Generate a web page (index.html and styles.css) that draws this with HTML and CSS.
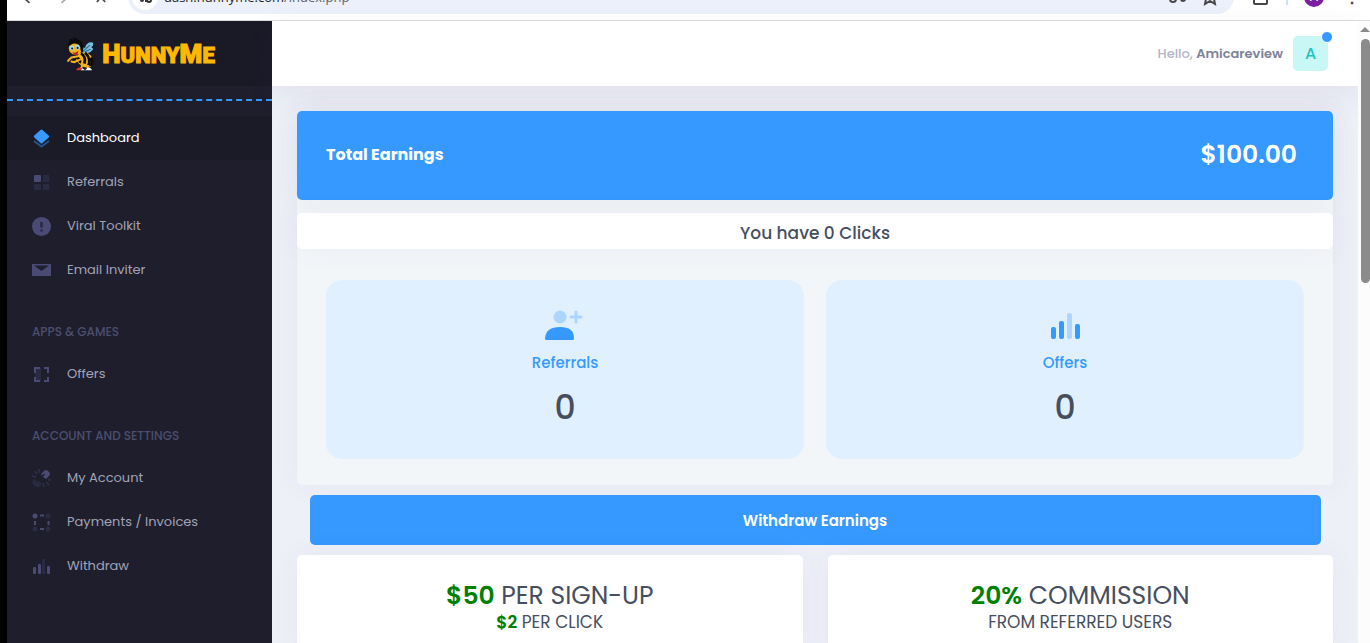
FILE: index.html
```html
<!DOCTYPE html>
<html lang="en">

<head>
    <meta charset="UTF-8">
    <meta name="viewport" content="width=device-width, initial-scale=1.0">
    <title>HunnyMe - Dashboard</title>
    <link rel="stylesheet" href="styles.css">
</head>

<body>
    <!-- Browser toolbar -->
    <div class="toolbar">
        <svg class="nav-icon" viewBox="0 0 24 24"><path d="M15 5L7 12l8 7"/></svg>
        <svg class="nav-icon muted" viewBox="0 0 24 24"><path d="M9 5l8 7-8 7"/></svg>
        <svg class="nav-icon" viewBox="0 0 24 24"><path d="M7 18l10-11M7 7l10 11"/></svg>
        <div class="address">
            <span class="site-info">
                <svg viewBox="0 0 16 16"><path d="M1 6h6M8 12h2"/><circle cx="5" cy="11" r="1"/><circle cx="12" cy="11" r="2"/></svg>
            </span>
            <span class="url">dash.hunnyme.com<span>/index.php</span></span>
            <svg class="tool-icon" viewBox="0 0 20 20"><circle cx="5" cy="12" r="3"/><circle cx="15" cy="12" r="2"/></svg>
            <svg class="tool-icon" viewBox="0 0 20 20"><path d="M10 2l2 5 6 1-4 4 1 5-5-3-5 3 1-5-4-4 6-1z"/></svg>
        </div>
        <svg class="tool-icon extension" viewBox="0 0 20 20"><path d="M4 4h13v12a1 1 0 0 1-1 1H5a1 1 0 0 1-1-1z"/></svg>
        <span class="divider"></span>
        <span class="profile">A</span>
        <span class="dots">&#8942;</span>
    </div>

    <div class="app">
        <!-- Sidebar -->
        <aside class="sidebar">
            <a href="#" class="brand">
                <svg class="bee" viewBox="0 0 50 50">
                    <path d="M17 9Q12 3 8 4M22 8Q18 1 13 1" fill="none" stroke="#08080c" stroke-width="1.5"/>
                    <path d="M27 21Q26 14 31 16Q33 7 42 8Q45 11 40 15Q45 17 41 20Q38 25 27 24z" fill="#79bfe0"/>
                    <path d="M28 21l10-9M30 22l9-4" stroke="#2d6f95" stroke-width="1.5"/>
                    <path d="M22 24Q36 20 41 30Q44 39 38 45Q24 46 18 33z" fill="#f4b21b"/>
                    <path d="M25 24Q33 29 30 39M31 23Q41 32 35 44M19 30Q25 34 23 38M40 30Q43 38 39 43" fill="none" stroke="#0b0a0a" stroke-width="4"/>
                    <circle cx="17" cy="16" r="10" fill="#f4b21b"/>
                    <path d="M6 14Q5 3 18 3Q31 6 28 22Q24 24 24 15Q19 8 13 10z" fill="#0b0a0a"/>
                    <ellipse cx="12" cy="16" rx="3" ry="4" fill="#9edbf2"/>
                    <ellipse cx="20" cy="15" rx="3" ry="4" fill="#9edbf2"/>
                    <circle cx="12" cy="17" r="1.5" fill="#123"/>
                    <circle cx="20" cy="16" r="1.5" fill="#123"/>
                    <path d="M12 22Q18 25 21 20Q21 27 16 27z" fill="#b92718"/>
                    <path d="M23 28l-12 2-5 5M24 33l-9 4-4-1" fill="none" stroke="#f4b21b" stroke-width="3" stroke-linecap="round"/>
                    <path d="M28 40l-3 6M35 41v5" stroke="#f4b21b" stroke-width="3"/>
                    <path d="M18 49q1-5 7-4l2 4z" fill="#d73532"/>
                    <path d="M25 49l2-3 4 3zM31 49l4-4q5 0 6 4z" fill="#fff"/>
                </svg>
                <span class="brand-name"><b>H</b>UNNY<b>M</b>E</span>
            </a>

            <nav class="menu">
                <a href="#" class="active">
                    <svg viewBox="0 0 24 24">
                        <path d="M5 15l7.500 5.500L20 15" fill="none" stroke="currentColor" stroke-width="2" opacity=".45"/>
                        <path d="M11.500 4q1-1 2 0l6.200 5.500q1 1 0 2L13.500 17q-1 1-2 0l-6.200-5.500q-1-1 0-2z"/>
                    </svg>
                    Dashboard
                </a>
                <a href="#">
                    <svg viewBox="0 0 24 24">
                        <rect x="5" y="5" width="7" height="7" rx="1"/>
                        <path class="dim" d="M14 5h6v7h-6zM5 14h7v6H5zM14 14h6v6h-6z"/>
                    </svg>
                    Referrals
                </a>
                <a href="#">
                    <svg viewBox="0 0 24 24">
                        <circle cx="12.500" cy="12.500" r="9.500"/>
                        <path d="M12.500 8v5.500M12.500 15.500v2" stroke="#2a2a40" stroke-width="2.500"/>
                    </svg>
                    Viral Toolkit
                </a>
                <a href="#">
                    <svg viewBox="0 0 24 24">
                        <path d="M3 6h19v12H3z"/>
                        <path d="M5 7.500h15L12.500 13z" fill="#1e1e2d"/>
                    </svg>
                    Email Inviter
                </a>

                <h4>Apps &amp; Games</h4>
                <a href="#">
                    <svg viewBox="0 0 24 24">
                        <path class="dim" d="M6 6h6v13H6z"/>
                        <path d="M11 6H6v5M6 15v4h5M15 6h4v5M19 15v4h-4" fill="none" stroke="currentColor" stroke-width="2"/>
                    </svg>
                    Offers
                </a>

                <h4>Account and Settings</h4>
                <a href="#">
                    <svg viewBox="0 0 24 24">
                        <path d="M12 8l3-3q2-2 4 0l1 1q2 2 0 4l-3 3-3-2 2-3-2 0-1 2z"/>
                        <path class="dim" d="M5 13l3 3 2-1 3 3-3 3q-2 1-4-1l-2-2q-2-2 1-5z"/>
                        <path d="M10 3v4M6 5l2 3M3 10l4 1M14 17l1 4M17 16l3 3M19 14h3" fill="none" stroke="#30304a" stroke-width="1.500"/>
                    </svg>
                    My Account
                </a>
                <a href="#">
                    <svg viewBox="0 0 24 24">
                        <circle cx="6" cy="6" r="2.500"/>
                        <path d="M11 5.500h4M11 19h4M6 11v4M19.500 11v4" stroke="currentColor" stroke-width="2"/>
                        <g class="dim"><circle cx="19" cy="6" r="2.500"/><circle cx="6" cy="19" r="2.500"/><circle cx="19" cy="19" r="2.500"/></g>
                    </svg>
                    Payments / Invoices
                </a>
                <a href="#">
                    <svg viewBox="0 0 24 24">
                        <rect x="4" y="13" width="3" height="7" rx="1"/>
                        <rect x="9" y="10" width="3" height="10" rx="1"/>
                        <rect class="dim" x="13" y="5" width="3" height="15" rx="1"/>
                        <rect x="18" y="12" width="3" height="8" rx="1"/>
                    </svg>
                    Withdraw
                </a>
            </nav>
        </aside>

        <!-- Page -->
        <div class="page">
            <header class="topbar">
                <span class="hello">Hello, <b>Amicareview</b></span>
                <a href="#" class="avatar">A</a>
            </header>

            <main class="content">
                <section class="summary">
                    <div class="earnings">
                        <h3>Total Earnings</h3>
                        <span class="amount">$100.00</span>
                    </div>
                    <div class="clicks">You have 0 Clicks</div>
                    <div class="tiles">
                        <div class="tile">
                            <svg viewBox="0 0 40 36">
                                <g class="light">
                                    <circle cx="15" cy="9" r="6.500"/>
                                    <path d="M31 4v10M26 9h10" fill="none" stroke="#acd6ff" stroke-width="3" stroke-linecap="round"/>
                                </g>
                                <path d="M0 30Q1 19 15 19T29 30q0 2-1 2H1q-1 0-1-2z"/>
                            </svg>
                            <a href="#">Referrals</a>
                            <span class="count">0</span>
                        </div>
                        <div class="tile">
                            <svg viewBox="0 0 40 36">
                                <rect x="6" y="19" width="5" height="12" rx="2"/>
                                <rect x="14" y="13" width="5" height="18" rx="2"/>
                                <rect class="light" x="22" y="5" width="5" height="26" rx="2"/>
                                <rect x="30" y="16" width="5" height="15" rx="2"/>
                            </svg>
                            <a href="#">Offers</a>
                            <span class="count">0</span>
                        </div>
                    </div>
                </section>

                <button type="button" class="withdraw">Withdraw Earnings</button>

                <section class="rates">
                    <div class="rate">
                        <h2><b>$50</b> PER SIGN-UP</h2>
                        <p><b>$2</b> PER CLICK</p>
                    </div>
                    <div class="rate">
                        <h2><b>20%</b> COMMISSION</h2>
                        <p>FROM REFERRED USERS</p>
                    </div>
                </section>
            </main>
        </div>

        <div class="scrollbar">
            <span class="arrow"></span>
            <span class="thumb"></span>
        </div>
    </div>
</body>

</html>
```
FILE: styles.css
```css
* {
    box-sizing: border-box;
}

body {
    display: flex;
    flex-direction: column;
    height: 100vh;
    margin: 0;
    padding-left: 7px;
    overflow: hidden;
    background-color: #000;
    color: #464e5f;
    font-family: Poppins, Inter, sans-serif;
    font-size: 13px;
}

a {
    text-decoration: none;
}

h2,
h3,
h4,
p {
    margin: 0;
}

/* Browser toolbar, scrolled partly off the top edge */
.toolbar {
    display: flex;
    flex: none;
    align-items: center;
    height: 41px;
    margin-top: -20px;
    padding: 0 10px 6px;
    background-color: #fff;
    border-bottom: 1px solid #dadce0;
}

.nav-icon {
    width: 20px;
    margin-right: 17px;
    fill: none;
    stroke: #474747;
    stroke-width: 2;
}

.nav-icon.muted {
    stroke: #aaa;
}

.address {
    display: flex;
    flex: 1;
    align-items: center;
    height: 34px;
    padding: 0 14px 0 4px;
    background-color: #ebf0fa;
    border-radius: 17px;
}

.site-info {
    display: flex;
    align-items: center;
    justify-content: center;
    width: 26px;
    height: 26px;
    border-radius: 50%;
    background-color: #fff;
}

.site-info svg {
    width: 16px;
    fill: none;
    stroke: #333;
    stroke-width: 2;
}

.url {
    flex: 1;
    margin-left: 6px;
    color: #1f1f1f;
    font-family: "Open Sans", sans-serif;
    font-size: 13px;
}

.url span {
    color: #5f6368;
}

.tool-icon {
    width: 20px;
    margin-left: 12px;
    fill: none;
    stroke: #474747;
    stroke-width: 2;
}

.extension {
    margin: 0 16px;
}

.divider {
    width: 2px;
    height: 16px;
    background-color: #cfdffb;
}

.profile {
    width: 20px;
    height: 20px;
    margin: 0 20px 0 16px;
    border-radius: 50%;
    background-color: #7b1fa2;
    color: #fff;
    line-height: 20px;
    text-align: center;
}

.dots {
    color: #474747;
    font-size: 16px;
    font-weight: bold;
}

.app {
    display: flex;
    flex: 1;
    min-height: 0;
}

/* Sidebar */
.sidebar {
    flex: none;
    width: 265px;
    background-color: #1e1e2d;
}

.brand {
    display: flex;
    align-items: center;
    justify-content: center;
    gap: 4px;
    height: 65px;
    background-color: #1a1a27;
}

.bee {
    width: 34px;
    height: 34px;
}

.brand-name {
    color: #ffb800;
    font-family: Roboto, sans-serif;
    font-size: 22px;
    font-weight: 900;
    -webkit-text-stroke: 1px #ffb800;
}

.brand-name b {
    font-size: 26px;
    font-weight: 900;
}

.menu {
    margin-top: 13px;
    padding-top: 15px;
    border-top: 2px dashed #3699ff;
}

.menu a {
    display: flex;
    align-items: center;
    gap: 14px;
    height: 44px;
    padding: 0 22px;
    color: #a2a3b7;
}

.menu a.active {
    background-color: #1b1b28;
    color: #fff;
}

.menu svg {
    width: 24px;
    height: 24px;
    color: #494b74;
    fill: currentColor;
}

.menu .active svg {
    color: #3699ff;
}

.menu .dim {
    opacity: 0.3;
}

.menu h4 {
    margin-top: 20px;
    padding-left: 25px;
    color: #4c4e6f;
    font-size: 12px;
    font-weight: 500;
    line-height: 40px;
    text-transform: uppercase;
}

/* Page */
.page {
    display: flex;
    flex: 1;
    flex-direction: column;
    background-color: #eef0f8;
}

.topbar {
    display: flex;
    flex: none;
    align-items: center;
    justify-content: flex-end;
    gap: 10px;
    height: 65px;
    padding-right: 30px;
    background-color: #fff;
    box-shadow: 0 10px 30px rgba(82, 63, 105, 0.08);
}

.hello {
    color: #b5b5c3;
    font-weight: 500;
}

.hello b {
    color: #7e8299;
    font-weight: 600;
}

.avatar {
    position: relative;
    width: 35px;
    height: 35px;
    border-radius: 5px;
    background-color: #c9f7f5;
    color: #1bc5bd;
    font-size: 16px;
    font-weight: 500;
    line-height: 35px;
    text-align: center;
}

.avatar::after {
    content: "";
    position: absolute;
    top: -5px;
    right: -5px;
    width: 10px;
    height: 10px;
    border: 1px solid #fff;
    border-radius: 50%;
    background-color: #3699ff;
}

.content {
    flex: 1;
    min-height: 0;
    padding: 25px 25px 0;
    overflow: hidden;
}

.summary {
    border-radius: 5px;
    background-color: #f3f6f9;
    box-shadow: 0 0 30px rgba(82, 63, 105, 0.05);
}

.earnings {
    display: flex;
    align-items: center;
    justify-content: space-between;
    height: 89px;
    padding: 0 36px 2px 29px;
    border-radius: 5px;
    background-color: #3699ff;
    color: #fff;
    box-shadow: 0 0 30px rgba(82, 63, 105, 0.05);
}

.earnings h3 {
    font-size: 16px;
    font-weight: 700;
}

.amount {
    font-size: 25px;
    font-weight: 600;
}

.clicks {
    margin-top: 13px;
    padding-top: 4px;
    border-radius: 5px;
    background-color: #fff;
    box-shadow: 0 0 30px rgba(82, 63, 105, 0.05);
    font-size: 17px;
    font-weight: 500;
    line-height: 32px;
    text-align: center;
}

.tiles {
    display: grid;
    grid-template-columns: 1fr 1fr;
    gap: 22px;
    padding: 31px 29px 26px;
}

.tile {
    display: flex;
    flex-direction: column;
    align-items: center;
    height: 179px;
    padding-top: 28px;
    border-radius: 16px;
    background-color: #e1f0ff;
}

.tile svg {
    width: 40px;
    height: 36px;
    fill: #3699ff;
}

.tile .light {
    fill: #acd6ff;
}

.tile a {
    margin-top: 8px;
    color: #3699ff;
    font-size: 15px;
    font-weight: 500;
    line-height: 22px;
}

.count {
    margin-top: 13px;
    font-size: 33px;
    font-weight: 500;
    line-height: 42px;
}

.withdraw {
    display: block;
    width: calc(100% - 25px);
    height: 50px;
    margin: 10px auto;
    border: none;
    border-radius: 5px;
    background-color: #3699ff;
    color: #fff;
    font-family: inherit;
    font-size: 15px;
    font-weight: 600;
    cursor: pointer;
}

.rates {
    display: grid;
    grid-template-columns: 1fr 1fr;
    gap: 25px;
}

.rate {
    padding: 25px 29px;
    border-radius: 5px;
    background-color: #fff;
    box-shadow: 0 0 30px rgba(82, 63, 105, 0.05);
    text-align: center;
}

.rate h2 {
    font-size: 25px;
    font-weight: 400;
    line-height: 32px;
}

.rate p {
    font-size: 17px;
    line-height: 20px;
}

.rate b {
    color: green;
    font-weight: 600;
}

/* Scrollbar */
.scrollbar {
    display: flex;
    flex: none;
    flex-direction: column;
    align-items: flex-end;
    width: 12px;
    background-color: #fcfcfc;
}

.arrow {
    margin-top: 6px;
    border: 5px solid transparent;
    border-top: none;
    border-bottom-color: #8b8b8b;
}

.thumb {
    width: 9px;
    height: 244px;
    margin-top: 7px;
    border-radius: 5px;
    background-color: #8b8b8b;
}
```
